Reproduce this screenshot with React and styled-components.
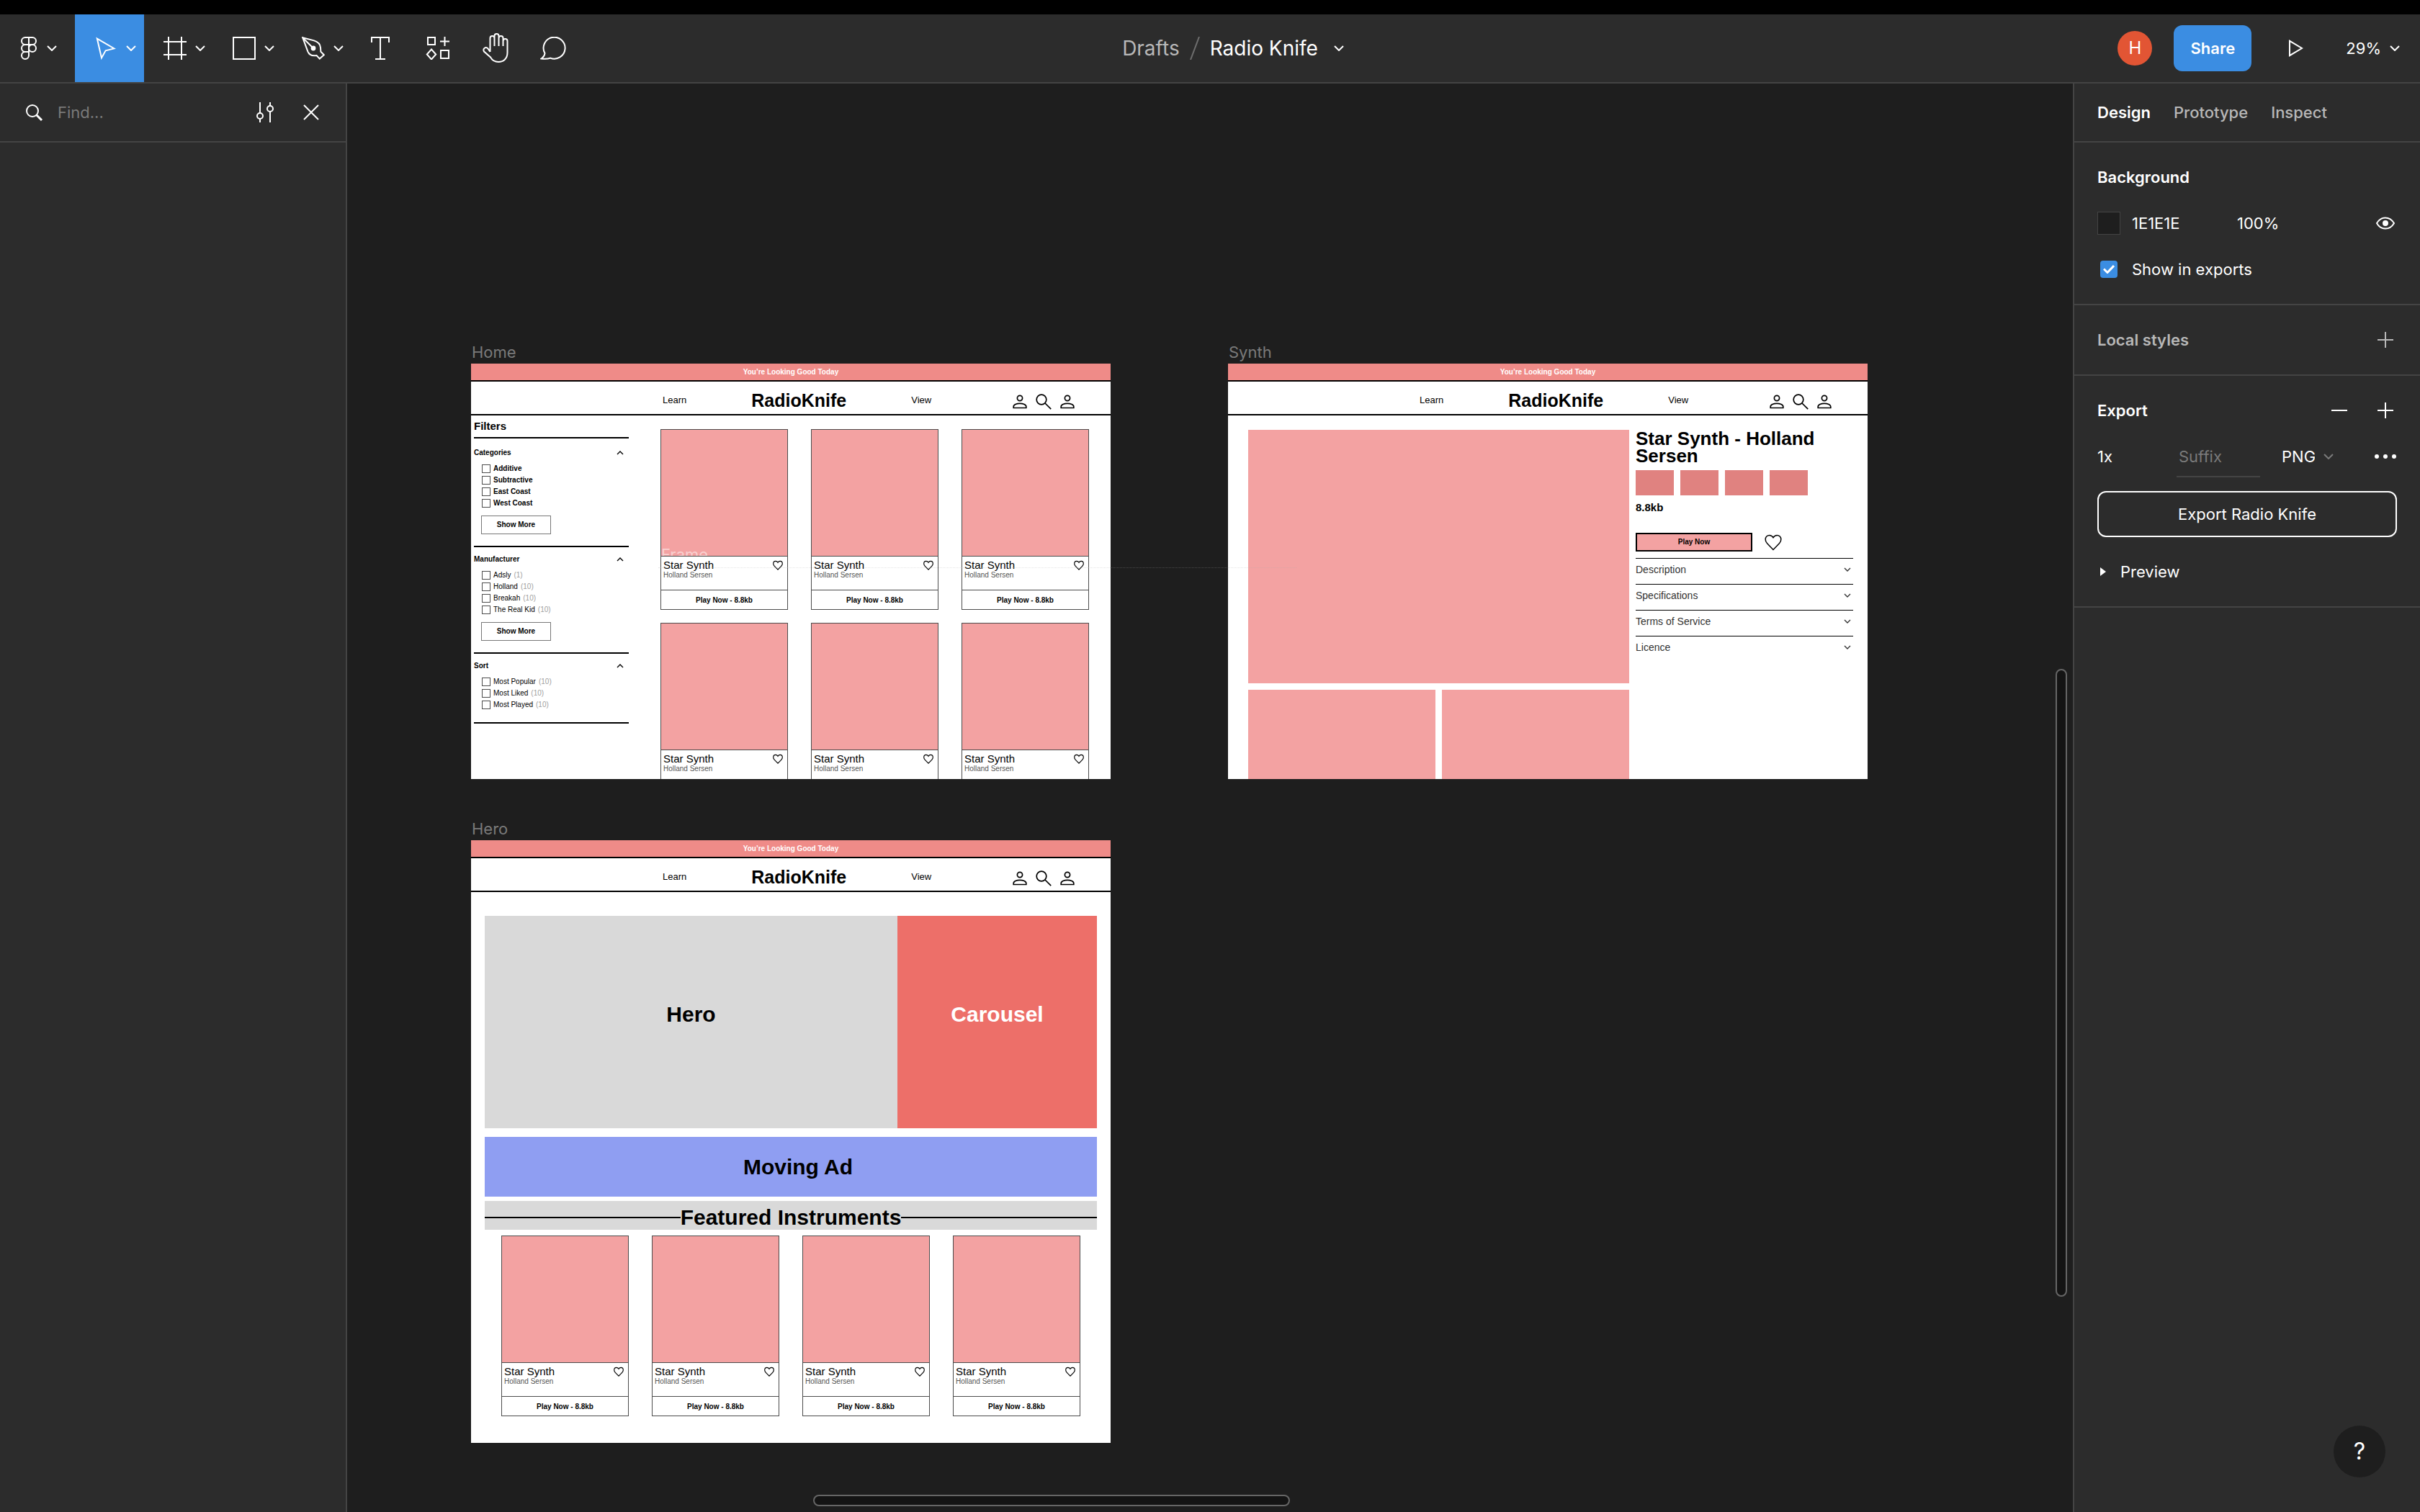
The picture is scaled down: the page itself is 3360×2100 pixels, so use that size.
import React from "react";
import styled, { createGlobalStyle, css } from "styled-components";

const GlobalStyle = createGlobalStyle`
  *, *::before, *::after { box-sizing: border-box; }
  body { margin: 0; background: #1e1e1e; }
  button, input, select { font: inherit; color: inherit; margin: 0; padding: 0; border: 0; background: none; }
  svg { display: block; flex: none; }
  h1, h2, h3, p, ul { margin: 0; padding: 0; font-size: inherit; font-weight: inherit; list-style: none; }
  a { color: inherit; text-decoration: none; }
`;

const ui = {
  panel: "#2c2c2c",
  line: "#444444",
  canvas: "#1e1e1e",
  blue: "#3b8de2",
  muted: "#b8b8b8",
  faint: "#7a7a7a",
};

const wire = {
  pink: "#f3a2a2",
  banner: "#ef8b88",
  thumb: "#e08280",
  coral: "#ed6f69",
  periwinkle: "#8f9ef2",
  grey: "#d9d9d9",
  outline: "#4c4c4c",
};

/* ---------- icons ---------- */

const Icon = ({ w, h, sw = 2, children, ...rest }) => (
  <svg
    width={w}
    height={h}
    viewBox={`0 0 ${w} ${h}`}
    fill="none"
    stroke="currentColor"
    strokeWidth={sw}
    aria-hidden="true"
    {...rest}
  >
    {children}
  </svg>
);

const Chevron = () => (
  <Icon w={14} h={8}>
    <path d="M1 1l6 6 6-6" />
  </Icon>
);
const FigmaIcon = () => (
  <Icon w={22} h={34}>
    <path d="M6 2h10a5 5 0 0 1 0 10H6A5 5 0 0 1 6 2zM11 2v20M11 12H6a5 5 0 0 0 0 10h5M11 22H6a5 5 0 1 0 5 5z" />
    <circle cx="16" cy="17" r="5" />
  </Icon>
);
const MoveIcon = () => (
  <Icon w={28} h={32}>
    <path d="M1.8 2.6L25.6 16.4 13.6 19.3 8 29.4z" />
  </Icon>
);
const FrameIcon = () => (
  <Icon w={32} h={32}>
    <path d="M7 0v32M25 0v32M0 7h32M0 25h32" />
  </Icon>
);
const RectIcon = () => (
  <Icon w={32} h={32}>
    <path d="M1 1h30v30H1z" />
  </Icon>
);
const PenIcon = () => (
  <Icon w={32} h={32}>
    <path d="M1.2 1.2L17 5.4c5 1.6 8.6 4.6 9 9.6l.4 5.8 4.4 4.4-6 5.4-4.2-4.6c-6 1-10.2-.4-12.2-5.4z" />
    <path d="M1.2 1.2l14 14" />
    <circle cx="16" cy="16" r="2.4" fill="currentColor" />
  </Icon>
);
const TextIcon = () => (
  <Icon w={26} h={32}>
    <path d="M1 8V1h24v7M13 1v30M6 31h14" />
  </Icon>
);
const ResourcesIcon = () => (
  <Icon w={34} h={32}>
    <path d="M3 1h10v10H3zM20 6.5h13M26.500 0v13M21 19h11v11H21zM8 17.500l6.200 7-6.200 7-6.200-7z" />
  </Icon>
);
const HandIcon = () => (
  <Icon w={36} h={42}>
    <path d="M10.500 26V7a3 3 0 0 1 6 0v11M16.500 7V4a3 3 0 0 1 6 0v14M22.500 7a3 3 0 0 1 6 0v11M28.500 11a3 3 0 0 1 6 0v16c0 8-5 13-12.500 13-5 0-8.500-2-11-6.500L2 25.500c-2.200-4 2.500-7.500 5.500-4l3 4.500" />
  </Icon>
);
const CommentIcon = () => (
  <Icon w={36} h={32}>
    <path d="M1.500 30.500c3-2 4.500-4.500 5-7.500A15 15 0 1 1 14 29.600c-3 1.200-7 1.400-12.500.9z" />
  </Icon>
);
const PlayIcon = () => (
  <Icon w={20} h={24}>
    <path d="M1 1.800v20.400L18 12z" />
  </Icon>
);
const SearchIcon = () => (
  <Icon w={24} h={24}>
    <circle cx="9" cy="10" r="8" />
    <path d="M14.500 15.500l7.500 7.500" strokeWidth="3" />
  </Icon>
);
const SlidersIcon = () => (
  <Icon w={24} h={28}>
    <path d="M5 0v15M5 23v5M19 0v5M19 13v15" />
    <circle cx="5" cy="19" r="4" />
    <circle cx="19" cy="9" r="4" />
  </Icon>
);
const CloseIcon = () => (
  <Icon w={22} h={22}>
    <path d="M1 1l20 20M21 1L1 21" />
  </Icon>
);
const EyeIcon = () => (
  <Icon w={26} h={18}>
    <path d="M1 9c3-5 7.500-7.600 12-7.600S22 4 25 9c-3 5-7.500 7.600-12 7.600S4 14 1 9z" />
    <circle cx="13" cy="9" r="3" fill="currentColor" />
  </Icon>
);
const PlusIcon = () => (
  <Icon w={22} h={22}>
    <path d="M0 11h22M11 0v22" />
  </Icon>
);
const MinusIcon = () => (
  <Icon w={22} h={22}>
    <path d="M0 11h22" />
  </Icon>
);
const DotsIcon = () => (
  <Icon w={30} h={6} stroke="none" fill="currentColor">
    <circle cx="3" cy="3" r="3" />
    <circle cx="15" cy="3" r="3" />
    <circle cx="27" cy="3" r="3" />
  </Icon>
);
const TriangleIcon = () => (
  <Icon w={8} h={12} stroke="none" fill="currentColor">
    <path d="M0 0l8 6-8 6z" />
  </Icon>
);
const UserIcon = () => (
  <Icon w={20} h={20} sw={1.7}>
    <circle cx="10" cy="5" r="3.600" />
    <path d="M1.200 18.500v-1.800c0-2.800 4.400-4.400 8.800-4.400s8.800 1.600 8.800 4.400v1.800z" />
  </Icon>
);
const LensIcon = () => (
  <Icon w={22} h={22} sw={1.7}>
    <circle cx="8" cy="8" r="6.800" />
    <path d="M13 13l8.200 8.200" />
  </Icon>
);
const HeartIcon = ({ size = 14, sw = 2 }) => (
  <svg
    width={size}
    height={size}
    viewBox="0 0 24 24"
    fill="none"
    stroke="currentColor"
    strokeWidth={sw}
    aria-hidden="true"
  >
    <path d="M12 22.400L3.600 13.800C1.600 11.700 1.200 9.900 1.200 8.200 1.200 5 3.500 2.400 6.700 2.400c2.200 0 4.200 1.300 5.300 3.300 1.100-2 3.100-3.300 5.300-3.300 3.200 0 5.500 2.600 5.500 5.800 0 1.700-.4 3.500-2.400 5.600z" />
  </svg>
);
const SmallChevron = ({ up }) => (
  <Icon w={10} h={6} sw={1.4}>
    <path d={up ? "M1 5l4-4 4 4" : "M1 1l4 4 4-4"} />
  </Icon>
);

/* ---------- application shell ---------- */

const Shell = styled.div`
  display: flex;
  flex-direction: column;
  min-height: 100vh;
  border-top: 20px solid #000;
  font-family: Inter, "Liberation Sans", sans-serif;
  font-size: 22px;
  line-height: 32px;
  color: #fff;
`;

const Toolbar = styled.header`
  display: grid;
  grid-template-columns: 1fr auto 1fr;
  height: 96px;
  background: ${ui.panel};
  border-bottom: 2px solid ${ui.line};
`;

const Tools = styled.nav`
  display: flex;
`;

const Tool = styled.button`
  display: flex;
  align-items: center;
  justify-content: center;
  gap: ${(p) => p.$gap || 12}px;
  width: ${(p) => p.$width || 80}px;
  padding-left: ${(p) => p.$inset || 0}px;
  background: ${(p) => (p.$active ? ui.blue : "transparent")};
`;

const Title = styled.div`
  display: flex;
  align-items: center;
  gap: 14px;
  padding-left: 64px;
  font-size: 28px;
`;

const Crumb = styled.a`
  color: ${ui.muted};
`;

const FileName = styled.button`
  display: flex;
  align-items: center;
  gap: 22px;
`;

const Actions = styled.div`
  display: flex;
  align-items: center;
  justify-content: flex-end;
  padding-right: 28px;
`;

const Avatar = styled.span`
  display: grid;
  place-items: center;
  width: 48px;
  height: 48px;
  margin-right: 30px;
  border-radius: 50%;
  background: #e25534;
  font-size: 24px;
`;

const ShareButton = styled.button`
  width: 108px;
  height: 64px;
  border-radius: 12px;
  background: ${ui.blue};
  font-weight: 600;
`;

const PlayButton = styled.button`
  display: grid;
  place-items: center;
  width: 124px;
  height: 64px;
`;

const ZoomButton = styled.button`
  display: flex;
  align-items: center;
  gap: 12px;
  margin-left: 7px;
`;

const Workspace = styled.div`
  display: flex;
  flex: 1;
`;

const LeftPanel = styled.aside`
  flex: none;
  width: 482px;
  background: ${ui.panel};
  border-right: 2px solid ${ui.line};
`;

const FindRow = styled.form`
  display: flex;
  align-items: center;
  height: 82px;
  padding: 0 16px 0 36px;
  border-bottom: 2px solid ${ui.line};

  label {
    display: flex;
    align-items: center;
    flex: 1;
    gap: 20px;
  }
`;

const TextInput = styled.input`
  width: 100%;
  min-width: 0;
  outline: 0;

  &::placeholder {
    color: ${ui.faint};
    opacity: 1;
  }
`;

const IconButton = styled.button`
  display: grid;
  place-items: center;
  width: 64px;
  height: 64px;
`;

const RightPanel = styled.aside`
  position: relative;
  flex: none;
  width: 482px;
  background: ${ui.panel};
  border-left: 2px solid ${ui.line};
`;

const Tabs = styled.div`
  display: flex;
  align-items: center;
  gap: 32px;
  height: 82px;
  padding: 0 32px;
  border-bottom: 2px solid ${ui.line};
`;

const Tab = styled.button`
  color: ${(p) => (p.$active ? "#fff" : ui.muted)};
  font-weight: ${(p) => (p.$active ? 600 : 500)};
`;

const Section = styled.section`
  padding: 16px 16px 16px 32px;
  border-bottom: 2px solid ${ui.line};
`;

const Row = styled.div`
  display: flex;
  align-items: center;
  height: 64px;
`;

const SectionTitle = styled.h2`
  margin-right: auto;
  font-weight: 600;
  color: ${(p) => (p.$muted ? ui.muted : "#fff")};
`;

const PanelIconButton = styled(IconButton)`
  width: 32px;
  margin: 0 16px;
  color: ${(p) => (p.$muted ? ui.muted : "#fff")};
`;

const Swatch = styled.button`
  width: 32px;
  height: 32px;
  margin-right: 16px;
  border: 1px solid ${ui.line};
  background: ${ui.canvas};
`;

const ValueInput = styled(TextInput)`
  width: ${(p) => p.$width}px;
`;

const CheckLabel = styled.label`
  display: flex;
  align-items: center;
  height: 64px;
  gap: 20px;
  padding-left: 4px;
`;

const CheckBox = styled.span`
  display: grid;
  place-items: center;
  width: 24px;
  height: 24px;
  border-radius: 4px;
  background: ${ui.blue};

  input {
    grid-area: 1 / 1;
    appearance: none;
    width: 24px;
    height: 24px;
  }
  svg {
    grid-area: 1 / 1;
    pointer-events: none;
  }
`;

const SuffixInput = styled(TextInput)`
  width: 116px;
  height: 58px;
  padding: 2px 3px 0;
  border-bottom: 2px solid ${ui.line};
`;

const FormatField = styled.label`
  display: flex;
  align-items: center;
  gap: 12px;
  margin: 0 auto 0 30px;

  select {
    appearance: none;
    width: 46px;
  }
  svg {
    color: ${ui.faint};
  }
`;

const ExportButton = styled.button`
  display: block;
  width: calc(100% - 16px);
  height: 64px;
  margin: 16px 0;
  border: 2px solid #fff;
  border-radius: 12px;
`;

const PreviewButton = styled.button`
  display: flex;
  align-items: center;
  gap: 20px;
  height: 64px;
  padding-left: 4px;
`;

const HelpButton = styled.button`
  position: absolute;
  right: 48px;
  bottom: 48px;
  width: 72px;
  height: 72px;
  border-radius: 50%;
  background: ${ui.canvas};
  font-size: 32px;
`;

/* ---------- canvas ---------- */

const Canvas = styled.main`
  position: relative;
  flex: 1;
  min-width: 0;
  overflow: hidden;
  background: ${ui.canvas};
`;

const ScrollThumb = styled.div`
  position: absolute;
  border: 2px solid #666;
  border-radius: 8px;
  background: #141414;
  ${(p) =>
    p.$vertical
      ? css`
          top: 813px;
          right: 8px;
          width: 16px;
          height: 872px;
        `
      : css`
          left: 647px;
          bottom: 8px;
          width: 662px;
          height: 16px;
        `}
`;

const DottedGuide = styled.div`
  position: absolute;
  left: 432px;
  top: 672px;
  width: 886px;
  border-top: 1px dotted rgba(170, 170, 170, 0.3);
`;

const Artboard = styled.article`
  position: absolute;
  left: ${(p) => p.$x}px;
  top: ${(p) => p.$y}px;
  width: 888px;
`;

const ArtboardName = styled.h2`
  height: 26px;
  margin-bottom: 3px;
  padding-left: 1px;
  line-height: 26px;
  color: ${ui.faint};
`;

const Board = styled.div`
  height: ${(p) => p.$height}px;
  overflow: hidden;
  background: #fff;
  color: #000;
  font-family: "Liberation Sans", Arial, sans-serif;
  font-size: 10px;
  line-height: 14px;
`;

const Banner = styled.p`
  height: 25px;
  border-bottom: 2px solid #000;
  background: ${wire.banner};
  color: #fff;
  font-weight: 700;
  line-height: 23px;
  text-align: center;
`;

const SiteHeader = styled.div`
  display: flex;
  align-items: center;
  gap: 90px;
  height: 47px;
  padding: 6px 50px 0 266px;
  border-bottom: 2px solid #000;
`;

const SiteLink = styled.a`
  font-size: 13px;
`;

const Logo = styled.h3`
  font-size: 25px;
  font-weight: 700;
  line-height: 32px;
`;

const SiteIcons = styled.div`
  display: flex;
  align-items: center;
  gap: 12px;
  margin-left: auto;
  padding-top: 4px;
`;

const CardBox = styled.div`
  display: flex;
  flex-direction: column;
  width: 177px;
  height: 251px;
  border: 1px solid ${wire.outline};
`;

const CardImage = styled.div`
  position: relative;
  height: 176px;
  overflow: hidden;
  border-bottom: 1px solid ${wire.outline};
  background: ${wire.pink};
`;

const NestedName = styled.span`
  position: absolute;
  left: 0;
  top: 160px;
  font-family: Inter, sans-serif;
  font-size: 22px;
  line-height: 26px;
  color: rgba(255, 255, 255, 0.5);
`;

const CardInfo = styled.div`
  display: flex;
  justify-content: space-between;
  height: 46px;
  padding: 5px 6px 0 3px;
`;

const CardTitle = styled.h3`
  font-size: 15px;
`;

const CardMaker = styled.p`
  color: #555;
`;

const CardButton = styled.button`
  height: 27px;
  padding-top: 2px;
  border-top: 1px solid ${wire.outline};
  font-weight: 700;
`;

const CardGrid = styled.div`
  display: grid;
  grid-template-columns: repeat(${(p) => p.$columns}, 177px);
  align-content: start;
  gap: 18px 32px;
`;

const HomeBody = styled.div`
  display: flex;
  justify-content: space-between;
  padding: 0 30px 0 4px;

  ${CardGrid} {
    padding-top: 19px;
  }
`;

const Filters = styled.form`
  width: 215px;
`;

const FiltersTitle = styled.h3`
  height: 32px;
  margin-bottom: 3px;
  border-bottom: 2px solid #000;
  font-size: 15px;
  font-weight: 700;
  line-height: 30px;
`;

const FilterGroup = styled.section`
  padding: 10px 0 16px;
  border-bottom: 2px solid #000;
`;

const FilterHeading = styled.button`
  display: flex;
  align-items: center;
  justify-content: space-between;
  width: 100%;
  height: 14px;
  margin-bottom: 7px;
  padding-right: 7px;
  font-weight: 700;
`;

const FilterOption = styled.label`
  display: flex;
  align-items: center;
  gap: 4px;
  height: 16px;
  padding-left: 11px;
  font-weight: ${(p) => (p.$bold ? 700 : 400)};

  input {
    appearance: none;
    width: 12px;
    height: 12px;
    border: 1px solid ${wire.outline};
  }
`;

const Count = styled.span`
  color: #a0a0a0;
`;

const ShowMore = styled.button`
  display: block;
  width: 97px;
  height: 26px;
  margin: 9px 0 0 10px;
  border: 1px solid #777;
  font-weight: 700;
`;

const SynthBody = styled.div`
  display: grid;
  grid-template-columns: 529px 302px;
  gap: 9px;
  padding: 20px 20px 0 28px;
`;

const Gallery = styled.div`
  display: grid;
  grid-template-columns: 1fr 1fr;
  grid-template-rows: 352px 352px;
  gap: 9px;
`;

const Photo = styled.div`
  grid-column: ${(p) => (p.$wide ? "1 / -1" : "auto")};
  background: ${wire.pink};
`;

const ProductTitle = styled.h3`
  font-size: 26px;
  font-weight: 700;
  line-height: 24px;
`;

const Thumbs = styled.div`
  display: flex;
  gap: 9px;
  margin-top: 8px;
`;

const Thumb = styled.button`
  width: 53px;
  height: 35px;
  background: ${wire.thumb};
`;

const Price = styled.p`
  padding: 9px 0 27px;
  font-size: 15px;
  font-weight: 700;
  line-height: 16px;
`;

const BuyRow = styled.div`
  display: flex;
  align-items: center;
  gap: 17px;
  margin-bottom: 9px;
`;

const PlayNow = styled.button`
  width: 162px;
  height: 26px;
  border: 2px solid #000;
  background: ${wire.pink};
  font-weight: 700;
`;

const BareButton = styled.button`
  align-self: ${(p) => (p.$top ? "flex-start" : "center")};
`;

const AccordionItem = styled.button`
  display: flex;
  align-items: center;
  justify-content: space-between;
  width: 100%;
  height: 36px;
  padding: 0 3px 5px 0;
  border-top: 1px solid #000;
  color: #333;
  font-size: 14px;
`;

const HeroBody = styled.div`
  padding: 33px 19px 0;
`;

const BlockText = styled.h3`
  display: flex;
  align-items: center;
  justify-content: center;
  font-size: 30px;
  font-weight: 700;
  line-height: 32px;
`;

const HeroRow = styled.div`
  display: grid;
  grid-template-columns: 573px 1fr;
  height: 295px;
  margin-bottom: 12px;
`;

const HeroPane = styled(BlockText)`
  padding-bottom: 22px;
  background: ${(p) => (p.$accent ? wire.coral : wire.grey)};
  color: ${(p) => (p.$accent ? "#fff" : "#000")};
`;

const AdPane = styled(BlockText)`
  height: 83px;
  margin-bottom: 6px;
  padding-left: 20px;
  background: ${wire.periwinkle};
`;

const FeaturedPane = styled(BlockText)`
  height: 40px;
  margin-bottom: 8px;
  padding-top: 5px;
  background: ${wire.grey};

  &::before,
  &::after {
    content: "";
    flex: 1;
    height: 2px;
    background: #000;
  }
`;

const Featured = styled.div`
  padding: 0 23px;
`;

/* ---------- composed parts ---------- */

const SiteTop = () => (
  <>
    <Banner>You’re Looking Good Today</Banner>
    <SiteHeader>
      <SiteLink href="#learn">Learn</SiteLink>
      <Logo>RadioKnife</Logo>
      <SiteLink href="#view">View</SiteLink>
      <SiteIcons>
        <UserIcon />
        <LensIcon />
        <UserIcon />
      </SiteIcons>
    </SiteHeader>
  </>
);

const Card = ({ nested }) => (
  <CardBox>
    <CardImage>{nested && <NestedName>{nested}</NestedName>}</CardImage>
    <CardInfo>
      <div>
        <CardTitle>Star Synth</CardTitle>
        <CardMaker>Holland Sersen</CardMaker>
      </div>
      <BareButton $top type="button" aria-label="Like">
        <HeartIcon />
      </BareButton>
    </CardInfo>
    <CardButton type="button">Play Now - 8.8kb</CardButton>
  </CardBox>
);

const filterGroups = [
  {
    name: "Categories",
    bold: true,
    more: true,
    options: [["Additive"], ["Subtractive"], ["East Coast"], ["West Coast"]],
  },
  {
    name: "Manufacturer",
    more: true,
    options: [
      ["Adsly", "(1)"],
      ["Holland", "(10)"],
      ["Breakah", "(10)"],
      ["The Real Kid", "(10)"],
    ],
  },
  {
    name: "Sort",
    options: [
      ["Most Popular", "(10)"],
      ["Most Liked", "(10)"],
      ["Most Played", "(10)"],
    ],
  },
];

const HomeBoard = () => (
  <Artboard $x={172} $y={360}>
    <ArtboardName>Home</ArtboardName>
    <Board $height={577}>
      <SiteTop />
      <HomeBody>
        <Filters>
          <FiltersTitle>Filters</FiltersTitle>
          {filterGroups.map((group) => (
            <FilterGroup key={group.name}>
              <FilterHeading type="button">
                {group.name}
                <SmallChevron up />
              </FilterHeading>
              {group.options.map(([label, count]) => (
                <FilterOption key={label} $bold={group.bold}>
                  <input type="checkbox" />
                  {label}
                  {count && <Count>{count}</Count>}
                </FilterOption>
              ))}
              {group.more && <ShowMore type="button">Show More</ShowMore>}
            </FilterGroup>
          ))}
        </Filters>
        <CardGrid $columns={3}>
          {["Frame", "", "", "", "", ""].map((nested, i) => (
            <Card key={i} nested={nested} />
          ))}
        </CardGrid>
      </HomeBody>
    </Board>
  </Artboard>
);

const SynthBoard = () => (
  <Artboard $x={1223} $y={360}>
    <ArtboardName>Synth</ArtboardName>
    <Board $height={577}>
      <SiteTop />
      <SynthBody>
        <Gallery>
          <Photo $wide />
          <Photo />
          <Photo />
        </Gallery>
        <div>
          <ProductTitle>Star Synth - Holland Sersen</ProductTitle>
          <Thumbs>
            {[1, 2, 3, 4].map((n) => (
              <Thumb key={n} type="button" aria-label={`Photo ${n}`} />
            ))}
          </Thumbs>
          <Price>8.8kb</Price>
          <BuyRow>
            <PlayNow type="button">Play Now</PlayNow>
            <BareButton type="button" aria-label="Like">
              <HeartIcon size={24} sw={1.5} />
            </BareButton>
          </BuyRow>
          {["Description", "Specifications", "Terms of Service", "Licence"].map((item) => (
            <AccordionItem key={item} type="button">
              {item}
              <SmallChevron />
            </AccordionItem>
          ))}
        </div>
      </SynthBody>
    </Board>
  </Artboard>
);

const HeroBoard = () => (
  <Artboard $x={172} $y={1022}>
    <ArtboardName>Hero</ArtboardName>
    <Board $height={837}>
      <SiteTop />
      <HeroBody>
        <HeroRow>
          <HeroPane>Hero</HeroPane>
          <HeroPane $accent>Carousel</HeroPane>
        </HeroRow>
        <AdPane>Moving Ad</AdPane>
        <FeaturedPane>Featured Instruments</FeaturedPane>
        <Featured>
          <CardGrid $columns={4}>
            {[0, 1, 2, 3].map((i) => (
              <Card key={i} />
            ))}
          </CardGrid>
        </Featured>
      </HeroBody>
    </Board>
  </Artboard>
);

const TopBar = () => (
  <Toolbar>
    <Tools>
      <Tool $width={104} $gap={14} $inset={4} aria-label="Main menu">
        <FigmaIcon />
        <Chevron />
      </Tool>
      <Tool $width={96} $gap={14} $inset={18} $active aria-label="Move">
        <MoveIcon />
        <Chevron />
      </Tool>
      <Tool $width={96} $inset={16} aria-label="Frame">
        <FrameIcon />
        <Chevron />
      </Tool>
      <Tool $width={96} $inset={16} aria-label="Rectangle">
        <RectIcon />
        <Chevron />
      </Tool>
      <Tool $width={96} $inset={16} aria-label="Pen">
        <PenIcon />
        <Chevron />
      </Tool>
      <Tool aria-label="Text">
        <TextIcon />
      </Tool>
      <Tool aria-label="Resources">
        <ResourcesIcon />
      </Tool>
      <Tool aria-label="Hand">
        <HandIcon />
      </Tool>
      <Tool aria-label="Comment">
        <CommentIcon />
      </Tool>
    </Tools>
    <Title>
      <Crumb href="#drafts">Drafts</Crumb>
      <Icon w={14} h={32} color="#6e6e6e">
        <path d="M1 32L13 0" />
      </Icon>
      <FileName>
        Radio Knife
        <Chevron />
      </FileName>
    </Title>
    <Actions>
      <Avatar>H</Avatar>
      <ShareButton>Share</ShareButton>
      <PlayButton aria-label="Present">
        <PlayIcon />
      </PlayButton>
      <ZoomButton>
        29%
        <Chevron />
      </ZoomButton>
    </Actions>
  </Toolbar>
);

const Inspector = () => (
  <RightPanel>
    <Tabs>
      <Tab $active>Design</Tab>
      <Tab>Prototype</Tab>
      <Tab>Inspect</Tab>
    </Tabs>
    <Section>
      <Row>
        <SectionTitle>Background</SectionTitle>
      </Row>
      <Row>
        <Swatch aria-label="Background colour" />
        <ValueInput $width={146} defaultValue="1E1E1E" aria-label="Hex colour" />
        <ValueInput $width={174} defaultValue="100%" aria-label="Opacity" />
        <PanelIconButton aria-label="Toggle visibility">
          <EyeIcon />
        </PanelIconButton>
      </Row>
      <CheckLabel>
        <CheckBox>
          <input type="checkbox" defaultChecked />
          <Icon w={16} h={12} sw={3}>
            <path d="M1 5.500l5 5L15 1" />
          </Icon>
        </CheckBox>
        Show in exports
      </CheckLabel>
    </Section>
    <Section>
      <Row>
        <SectionTitle $muted>Local styles</SectionTitle>
        <PanelIconButton $muted aria-label="Add style">
          <PlusIcon />
        </PanelIconButton>
      </Row>
    </Section>
    <Section>
      <Row>
        <SectionTitle>Export</SectionTitle>
        <PanelIconButton aria-label="Remove export">
          <MinusIcon />
        </PanelIconButton>
        <PanelIconButton aria-label="Add export">
          <PlusIcon />
        </PanelIconButton>
      </Row>
      <Row>
        <ValueInput $width={110} defaultValue="1x" aria-label="Scale" />
        <SuffixInput placeholder="Suffix" aria-label="Suffix" />
        <FormatField>
          <select aria-label="Format" defaultValue="PNG">
            <option>PNG</option>
            <option>JPG</option>
            <option>SVG</option>
            <option>PDF</option>
          </select>
          <Chevron />
        </FormatField>
        <PanelIconButton aria-label="More options">
          <DotsIcon />
        </PanelIconButton>
      </Row>
      <ExportButton>Export Radio Knife</ExportButton>
      <PreviewButton>
        <TriangleIcon />
        Preview
      </PreviewButton>
    </Section>
    <HelpButton aria-label="Help">?</HelpButton>
  </RightPanel>
);

export default function App() {
  return (
    <Shell>
      <GlobalStyle />
      <TopBar />
      <Workspace>
        <LeftPanel>
          <FindRow>
            <label>
              <SearchIcon />
              <TextInput placeholder="Find..." aria-label="Find" />
            </label>
            <IconButton type="button" aria-label="Filter">
              <SlidersIcon />
            </IconButton>
            <IconButton type="button" aria-label="Close">
              <CloseIcon />
            </IconButton>
          </FindRow>
        </LeftPanel>
        <Canvas>
          <HomeBoard />
          <SynthBoard />
          <HeroBoard />
          <DottedGuide />
          <ScrollThumb $vertical />
          <ScrollThumb />
        </Canvas>
        <Inspector />
      </Workspace>
    </Shell>
  );
}
